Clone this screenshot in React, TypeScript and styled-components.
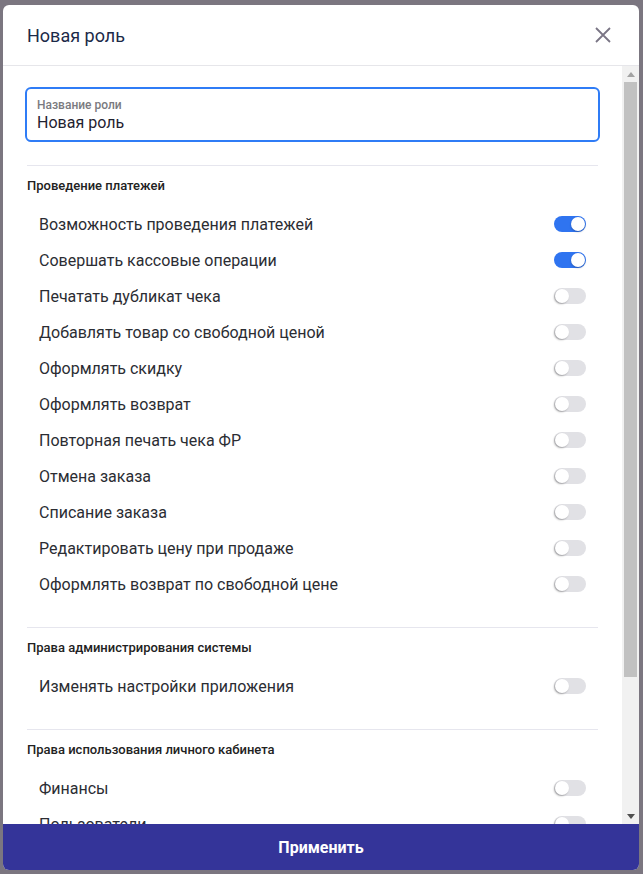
import React, { useState } from 'react';
import styled, { createGlobalStyle } from 'styled-components';

const GlobalStyle = createGlobalStyle`
  html, body {
    margin: 0;
    padding: 0;
    height: 100%;
    background: #7b7680;
    font-family: Roboto, "Noto Sans", sans-serif;
  }
  #root {
    height: 100%;
  }
`;

const Backdrop = styled.div`
  height: 874px;
  box-sizing: border-box;
  padding: 5px 4px 4px 3px;
  display: flex;
`;

const Modal = styled.div`
  flex: 1;
  display: flex;
  flex-direction: column;
  background: #fff;
  border-radius: 6px;
  overflow: hidden;
`;

const Header = styled.div`
  height: 60px;
  flex-shrink: 0;
  display: flex;
  align-items: center;
  justify-content: space-between;
  padding: 0 26px 0 24px;
  border-bottom: 1px solid #e6e6ea;
`;

const Title = styled.h2`
  margin: 0;
  font-size: 18px;
  font-weight: 400;
  color: #1c2a48;
`;

const CloseButton = styled.button`
  border: 0;
  background: none;
  padding: 0;
  width: 20px;
  height: 20px;
  display: flex;
  align-items: center;
  justify-content: center;
  cursor: pointer;
`;

const BodyWrap = styled.div`
  flex: 1;
  min-height: 0;
  display: flex;
`;

const Body = styled.div`
  flex: 1;
  overflow: hidden;
  padding: 21px 22px 0 22px;
`;

// scrollbar drawn by hand: the headless browser hides native ones
const Rail = styled.div`
  width: 17px;
  flex-shrink: 0;
  background: #f1f1f1;
  display: flex;
  flex-direction: column;
`;

const RailArrow = styled.div`
  height: 16px;
  flex-shrink: 0;
  display: flex;
  align-items: center;
  justify-content: center;
`;

const RailTrack = styled.div`
  flex: 1;
  padding: 0 2px;
`;

const Thumb = styled.div`
  height: 595px;
  background: #c1c1c1;
`;

const Field = styled.label`
  display: flex;
  flex-direction: column;
  height: 55px;
  box-sizing: border-box;
  border: 2px solid #2f7cf6;
  border-radius: 6px;
  padding: 9px 10px 0 10px;
`;

const FieldLabel = styled.span`
  font-size: 12px;
  font-weight: 500;
  color: #7a7a80;
  line-height: 14px;
`;

const FieldInput = styled.input`
  border: 0;
  outline: none;
  padding: 0;
  margin-top: 1px;
  font-family: inherit;
  font-size: 16px;
  line-height: 20px;
  color: #1f2230;
  caret-color: #1f2230;
  background: transparent;
`;

const Section = styled.section`
  border-top: 1px solid #e6e6ee;
  margin: 23px 2px 0 2px;
  padding-top: 12px;
  padding-bottom: 2px;
`;

const SectionTitle = styled.h3`
  margin: 0 0 12px 0;
  font-size: 13px;
  font-weight: 500;
  line-height: 16px;
  color: #222;
`;

const Row = styled.div`
  height: 36px;
  display: flex;
  align-items: center;
  justify-content: space-between;
  padding: 0 12px;
`;

const RowLabel = styled.span`
  font-size: 16px;
  color: #2b2d33;
`;

const Track = styled.button<{ $on: boolean }>`
  position: relative;
  width: 32px;
  height: 16px;
  border: 0;
  padding: 0;
  border-radius: 8px;
  background: ${(p) => (p.$on ? '#2f74f0' : '#e1e1e5')};
  cursor: pointer;
`;

const Knob = styled.span<{ $on: boolean }>`
  position: absolute;
  top: 1px;
  left: ${(p) => (p.$on ? '17px' : '1px')};
  width: 14px;
  height: 14px;
  border-radius: 50%;
  background: #fff;
  box-shadow: ${(p) => (p.$on ? '0 1px 2px rgba(0,0,0,0.25)' : '-1px 1px 2px rgba(0,0,0,0.3)')};
`;

const ApplyButton = styled.button`
  flex-shrink: 0;
  height: 46px;
  border: 0;
  background: #343499;
  color: #fff;
  font-family: inherit;
  font-size: 16px;
  font-weight: 700;
  cursor: pointer;
`;

type Group = { title: string; items: { label: string; on?: boolean }[] };

const groups: Group[] = [
  {
    title: 'Проведение платежей',
    items: [
      { label: 'Возможность проведения платежей', on: true },
      { label: 'Совершать кассовые операции', on: true },
      { label: 'Печатать дубликат чека' },
      { label: 'Добавлять товар со свободной ценой' },
      { label: 'Оформлять скидку' },
      { label: 'Оформлять возврат' },
      { label: 'Повторная печать чека ФР' },
      { label: 'Отмена заказа' },
      { label: 'Списание заказа' },
      { label: 'Редактировать цену при продаже' },
      { label: 'Оформлять возврат по свободной цене' },
    ],
  },
  {
    title: 'Права администрирования системы',
    items: [{ label: 'Изменять настройки приложения' }],
  },
  {
    title: 'Права использования личного кабинета',
    items: [
      { label: 'Финансы' },
      { label: 'Пользователи' },
      { label: 'Отчёты' },
      { label: 'Справочники' },
    ],
  },
];

function Toggle({ initial }: { initial: boolean }) {
  const [on, setOn] = useState(initial);
  return (
    <Track $on={on} onClick={() => setOn(!on)}>
      <Knob $on={on} />
    </Track>
  );
}

function App() {
  return (
    <>
      <GlobalStyle />
      <Backdrop>
        <Modal>
          <Header>
            <Title>Новая роль</Title>
            <CloseButton aria-label="close">
              <svg width="16" height="16" viewBox="0 0 16 16">
                <path d="M1 1L15 15M15 1L1 15" stroke="#7a7585" strokeWidth="1.8" />
              </svg>
            </CloseButton>
          </Header>
          <BodyWrap>
            <Body>
              <Field>
                <FieldLabel>Название роли</FieldLabel>
                <FieldInput defaultValue="Новая роль" autoFocus />
              </Field>
              {groups.map((g) => (
                <Section key={g.title}>
                  <SectionTitle>{g.title}</SectionTitle>
                  {g.items.map((it) => (
                    <Row key={it.label}>
                      <RowLabel>{it.label}</RowLabel>
                      <Toggle initial={!!it.on} />
                    </Row>
                  ))}
                </Section>
              ))}
            </Body>
            <Rail>
              <RailArrow>
                <svg width="8" height="5" viewBox="0 0 8 5">
                  <polygon points="0,5 8,5 4,0" fill="#a3a3a3" />
                </svg>
              </RailArrow>
              <RailTrack>
                <Thumb />
              </RailTrack>
              <RailArrow>
                <svg width="8" height="5" viewBox="0 0 8 5">
                  <polygon points="0,0 8,0 4,5" fill="#505050" />
                </svg>
              </RailArrow>
            </Rail>
          </BodyWrap>
          <ApplyButton>Применить</ApplyButton>
        </Modal>
      </Backdrop>
    </>
  );
}

export default App;
